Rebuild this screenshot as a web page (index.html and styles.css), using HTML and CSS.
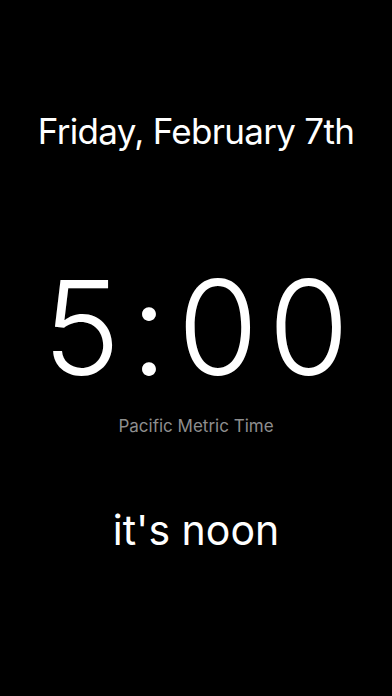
FILE: index.html
```html
<!DOCTYPE html>
<html>
<head>
<meta charset="utf-8">
<link rel="stylesheet" href="styles.css">
</head>
<body>
<main class="screen">
  <div class="date">Friday, February 7th</div>
  <div class="time">5:00</div>
  <div class="zone">Pacific Metric Time</div>
  <div class="phrase">it's noon</div>
</main>
</body>
</html>
```
FILE: styles.css
```css
html, body {
  margin: 0;
  padding: 0;
  background: #000;
}
.screen {
  width: 392px;
  height: 696px;
  background: #000;
  color: #fff;
  font-family: Inter, "Noto Sans", sans-serif;
  display: flex;
  flex-direction: column;
  align-items: center;
  padding-top: 109px;
  box-sizing: border-box;
}
.date {
  font-size: 35px;
  line-height: 44px;
  letter-spacing: -0.7px;
}
.time {
  margin-top: 100px;
  font-size: 131px;
  line-height: 150px;
  font-weight: 300;
  letter-spacing: 10px;
  text-indent: 10px;
}
.zone {
  margin-top: 13px;
  color: #8e8e8e;
  font-size: 17px;
  line-height: 20px;
}
.phrase {
  margin-top: 70px;
  font-size: 41px;
  line-height: 48px;
}
```
